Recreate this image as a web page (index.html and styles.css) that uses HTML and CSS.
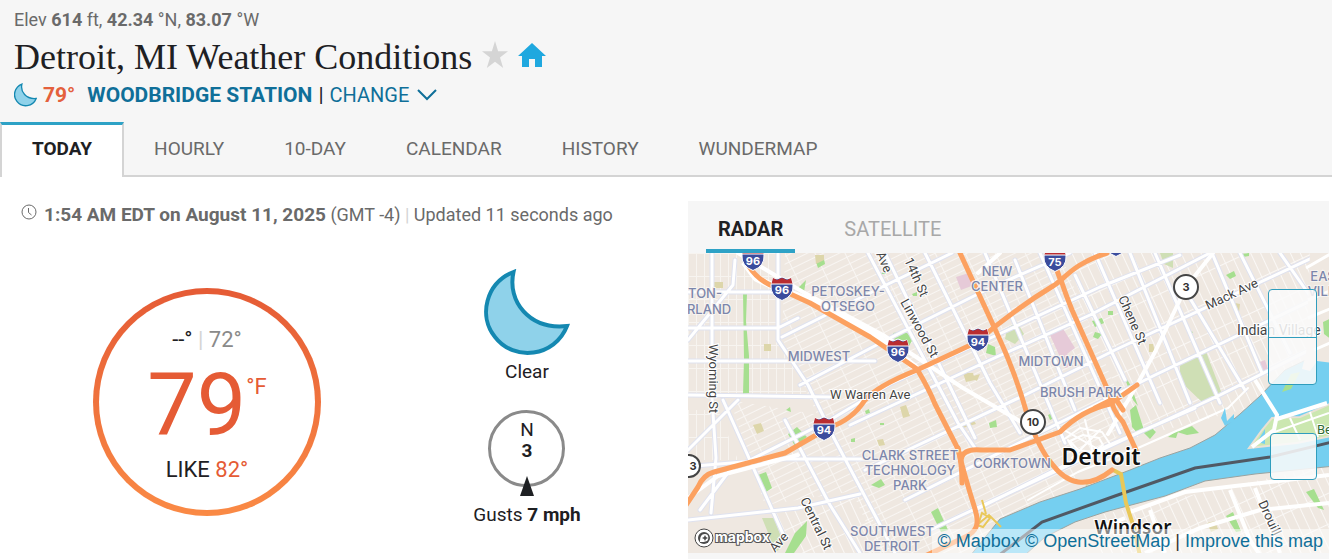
FILE: index.html
```html
<!DOCTYPE html>
<html lang="en">
<head>
<meta charset="utf-8">
<meta name="viewport" content="width=device-width, initial-scale=1">
<title>Detroit, MI Weather Conditions</title>
<link rel="stylesheet" href="styles.css">
</head>
<body>
<svg class="defs" width="0" height="0" aria-hidden="true">
  <symbol id="moon" viewBox="0 0 86 88">
    <path d="M29.500 3C2 14 -6 47 11 68C30 93 71 88 83 57C45 61 23 32 29.500 3Z"/>
  </symbol>
</svg>
<header class="city-header">
  <div class="city-info">
    <p class="coords">Elev <strong>614</strong> ft, <strong>42.34</strong> °N, <strong>83.07</strong> °W</p>
    <div class="title-row">
      <h1>Detroit, MI Weather Conditions</h1>
      <button class="icon-button" type="button" aria-label="Add to favorites">
        <svg width="26" height="28" viewBox="0 0 26 28"><path fill="#d5d5d5" d="M13 0l3.100 10.300H26l-8 6.200L21.200 27 13 20.700 4.800 27 8 16.500 0 10.300h9.900z"/></svg>
      </button>
      <button class="icon-button" type="button" aria-label="Set as home">
        <svg width="28" height="26" viewBox="0 0 28 26"><path fill="#1fa8df" d="M14 1L0 14h4v11h7v-8h6v8h7V14h4z"/></svg>
      </button>
    </div>
    <div class="station-row">
      <svg class="moon-small" width="23" height="24"><use href="#moon"/></svg>
      <strong class="station-temp">79°</strong>
      <a class="station-name" href="#station">WOODBRIDGE STATION</a>
      <span>|</span>
      <button class="change" type="button">CHANGE
        <svg width="20" height="12" viewBox="0 0 20 12"><path fill="none" stroke="#0f6f99" stroke-width="2" d="M1 1l9 9 9-9"/></svg>
      </button>
    </div>
  </div>
  <nav class="tabs">
    <a class="tab active" href="#today">TODAY</a>
    <a class="tab" href="#hourly">HOURLY</a>
    <a class="tab" href="#10-day">10-DAY</a>
    <a class="tab" href="#calendar">CALENDAR</a>
    <a class="tab" href="#history">HISTORY</a>
    <a class="tab" href="#wundermap">WUNDERMAP</a>
  </nav>
</header>
<main class="content">
  <section class="conditions">
    <p class="timestamp">
      <svg width="16" height="16" viewBox="0 0 16 16"><g fill="none" stroke="#6a6a6a"><circle cx="8" cy="8" r="7"/><path d="M7.500 4v4.500l3 2.500"/></g></svg>
      <span><strong>1:54 AM EDT on August 11, 2025</strong> (GMT -4) <span class="bar">|</span> Updated 11 seconds ago</span>
    </p>
    <div class="readings">
      <div class="dial">
        <p class="hi-lo">--° <span class="bar">|</span> <span class="low">72°</span></p>
        <p class="current"><span class="degrees">79</span><span class="unit">°F</span></p>
        <p class="feels">LIKE <span class="orange">82°</span></p>
      </div>
      <div class="sky-wind">
        <svg class="moon-large" width="86" height="88"><use href="#moon"/></svg>
        <p class="sky">Clear</p>
        <div class="compass">
          <span>N</span>
          <strong>3</strong>
          <svg class="needle" width="14" height="20" viewBox="0 0 14 20"><path fill="#1e2023" d="M7 0l7 20H0z"/></svg>
        </div>
        <p class="gusts">Gusts <strong>7 mph</strong></p>
      </div>
    </div>
  </section>
  <section class="map-panel">
    <div class="map-tabs">
      <button class="map-tab selected" type="button">RADAR</button>
      <button class="map-tab" type="button">SATELLITE</button>
    </div>
    <div class="map">
      <svg class="map-canvas" viewBox="688 253 641 300" preserveAspectRatio="xMidYMid slice" role="img" aria-label="Map of Detroit">
        <defs>
          <pattern id="grid-west" width="8" height="23" patternUnits="userSpaceOnUse"><path d="M0 0v23M0 0h8" stroke="#fff" stroke-width="2"/></pattern>
          <pattern id="grid-city" width="27" height="7" patternUnits="userSpaceOnUse" patternTransform="rotate(-26)"><path d="M0 0h27M0 0v7" stroke="#fff" stroke-width="2"/></pattern>
          <pattern id="grid-east" width="9" height="28" patternUnits="userSpaceOnUse" patternTransform="rotate(-25)"><path d="M0 0h9M0 0v28" stroke="#fff" stroke-width="2"/></pattern>
          <symbol id="shield" viewBox="0 0 24 24" overflow="visible">
            <path d="M3 1l4 1 5-2 5 2 4-1q1 4 2 7 1 11-11 15.500Q0 19 1 8q1-3 2-7z" fill="#3b4c9d" stroke="#fff"/>
            <path d="M3 1l4 2 5-2 5 2 4-2 1.500 6h-21z" fill="#b92d31"/><path d="M1.500 7h21" stroke="#fff"/>
          </symbol>
        </defs>
        <rect x="688" y="253" width="641" height="300" fill="#efe8e1"/>
        <path fill="url(#grid-west)" opacity=".5" d="M688 253h92v88l28 54H688zM688 410h30l20 50h-50z"/>
        <path fill="url(#grid-city)" opacity=".6" d="M785 253h275l70 170-75 80-75 50H880l-75-165-23-50zM730 400l90 15 40 75-95 15z"/>
        <path fill="url(#grid-east)" opacity=".7" d="M1065 253h264v110l-80 45-115 30z"/>
        <path fill="url(#grid-east)" opacity=".7" d="M1100 515l229-50v88h-229zM770 510l90-15 30 58h-90z"/>
        <g fill="#cfdfb5">
          <path d="M1180 365l25-16 17 45-19 9-23-22zM1160 253h13v15l-9-4zM1007 328l10-6 7 12-9 10-10-5zM762 518l12 0 10 27-8 7z"/>
          <path d="M1280 392l10-18 8 5-12 17zM1268 430l16-10 45-17v32l-75 11z"/>
        </g>
        <g fill="#a6df8f">
          <path d="M743 293h4l-1 28 3 35 0 37-6 1 1-35zM788 434l9-7 10 10-12 9zM758 475l8-3 6 16-9 6zM871 485l10-6 4 6-6 3zM931 512l7-4 10 22-7 2zM785 553l10-20 12-12-1 15-12 17zM816 262l8-3 1 5-7 4zM893 333l12-2 8 8-7 12-10-5zM988 344l7 3 1 9-10-3zM797 289l9-9-2 12z"/>
          <path d="M1095 332l7 2-4 5-5-2zM1092 321l10-3 2 5-9 4zM1108 311h5v4h-5zM1130 410l6-5 8 25-5 5-7-8zM1143 432l8-5 5 5-6 7zM1168 437l11-8-3 9zM1177 432l15-6 7 7-12 2zM1226 275l8-4 2 5-6 3zM1241 254l8-1v3l-6 1zM1226 516l7-4 8 19-5 1zM1306 492l8-3 10 21-6-2zM1048 415l6-3 2 5-6 3zM1187 330l6 2-3 3zM1122 371l9 15 7 20-5-6z"/>
          <path d="M786 410l4-3 1 5zM787 411l2-4zM989 423l7-3 1 7-7 1zM865 411l4-2 1 4-4 1zM851 439l4-1v4h-4zM880 423h4v2h-4zM912 294l5-2v4h-4zM880 274l6-3v3z"/>
        </g>
        <g fill="#ddd6aa">
          <path d="M712 282h11v6h-11zM764 344h7v7h-7zM753 425l8-2 3 8-7 3zM900 407l6-2 4 11-7 2zM953 427l20-8 3 5-20 6zM963 373h10l2 7-9 2zM877 440l6-1 2 6-6 1zM815 255h9v5l-8 4zM970 377l10-3-3 7zM1048 507l7 5-3 4zM1085 480l5 3-4 4zM1118 484h8l-2 5zM1207 523l8-2 3 8-7 3zM1149 344h4l2 8h-6zM1235 303l5 1-1 8-4-2z"/>
        </g>
        <path fill="#e6cad8" d="M956 277l13-4 5 12-13 5zM1050 335l12-8 13 21-8 6 6 12-8 2zM1257 363l8-3 3 9-8 3z"/>
        <g id="streets" fill="none" stroke-linejoin="round" stroke-linecap="round">
          <path stroke="#dfe2ef" stroke-width="5" d="M778 253v87l30 45 27 55 60 113M688 292h105M688 328h90l20-10M688 361h187M688 395l142 2M695 466l85-7h95M712 253v145l4 60-5 55M735 260l-2 25-45 55M723 400l60 134M688 520l110-12 62-14M785 420l45 85 30 48M868 253l90 170 17 25M885 253l90 185M925 253l65 130 30 50M985 253l80 190M1015 260l60 150M1040 253l80 180M1075 275l50 105M1095 253l65 150M1130 253l60 150M1155 253l65 150M1185 290l60 100M1212 253l50 120M1240 253l50 100M1280 253l49 70M700 510l30-40 100-50 60-36 120-55 90-42 80-32M782 337l100-50 70-34M800 385l90-47 100-50 80-35M850 425l140-65 100-45 120-62M865 470l160-75 90-45 214-100M905 500l150-75 100-50 174-83M930 530l150-70 140-65 109-55M975 510l100-50 120-52M688 450l50-50"/>
          <path stroke="#fff" stroke-width="3" d="M778 253v87l30 45 27 55 60 113M688 292h105M688 328h90l20-10M688 361h187M688 395l142 2M695 466l85-7h95M712 253v145l4 60-5 55M735 260l-2 25-45 55M723 400l60 134M688 520l110-12 62-14M785 420l45 85 30 48M868 253l90 170 17 25M885 253l90 185M925 253l65 130 30 50M985 253l80 190M1015 260l60 150M1040 253l80 180M1075 275l50 105M1095 253l65 150M1130 253l60 150M1155 253l65 150M1185 290l60 100M1212 253l50 120M1240 253l50 100M1280 253l49 70M700 510l30-40 100-50 60-36 120-55 90-42 80-32M782 337l100-50 70-34M800 385l90-47 100-50 80-35M850 425l140-65 100-45 120-62M865 470l160-75 90-45 214-100M905 500l150-75 100-50 174-83M930 530l150-70 140-65 109-55M975 510l100-50 120-52M688 450l50-50"/>
          <path stroke="#fff" stroke-width="4" d="M738 253l65 39 80 43 80 53 60 35M1213 253l-27 34-31 65-22 40-25 42M688 498l30-22 80-21M1000 253l-22 20"/>
          <path stroke="#fff" stroke-width="2" d="M1063 440l17-12 22 4 8 12-14 12-20-2-8-14M1070 441l13-6 16 3 4 7-10 7-15-2-8-9M1085 420l8 33M1064 430l41 23M1072 458l28-28M1028 500l50-28 60-24 90-40 20-20"/>
        </g>
        <path fill="#75cff0" stroke="#9aa3a0" d="M970 556l30-37 40-17 40-13 50-19 30-12 30-10 25-13 25-21 20-18 25-26 25-12 25-7v115l-30 3-50 5-50 7-40 15-60 16-30 10-30 15-20 18z"/>
        <path fill="#efe8e1" d="M1310 253h22v110l-15-2-7 10-8-2 4-15z"/>
        <path fill="none" stroke="#fff" stroke-width="3" d="M1306 268l26-15M1308 300l24-10M1308 318l24-10M1314 350l18-8"/>
        <path fill="#a6df8f" d="M1282 392l9-18 9-2-9 17zM1323 322l9-4v22l-8-6z"/>
        <path fill="#cbe7b0" stroke="#e9e1d5" stroke-width="2" d="M1249 448l13-18 10-12 28-1 32-14v33l-35 7z"/>
        <path fill="#75cff0" d="M1257 442l8-13v15zM1221 418l4-10 2 13 7-7v7l-9 5z"/>
        <g fill="none" stroke="#fff">
          <path stroke-width="4" d="M1255 380l22 35-3 15-22 17M1277 419l50-16M1130 512l55-20 50-6 94-11M1145 553l55-25 60-18 69-7M1230 490l20 50 10 15M1255 488l25 65M1150 510l15 43M1100 528l25-10"/>
          <path stroke-width="2" d="M1266 435l63-22M1290 418l10 22M1310 412l8 25"/>
        </g>
        <path fill="none" stroke="#505964" stroke-width="3" d="M998 556l44-34 73-26 80-28 75-11 62-15"/>
        <g fill="none" stroke="#e9c859" stroke-width="4"><path d="M1113 470l8 4 5 29 8 25 6 28"/><path stroke-width="2" d="M982 500l4 14M978 525l4-12 8 5-7 9-6-2 12-10 12 12"/></g>
        <g fill="none" stroke="#fff" stroke-width="7" stroke-linejoin="round"><path d="M744 262l12 16 19 9 36 14 64 34 42 34"/></g>
        <g fill="none" stroke="#fca160" stroke-width="5" stroke-linejoin="round" stroke-linecap="round">
          <path d="M748 265q10 16 27 22l35 16 60 34 25 17 22 15q12 20 18 35l23 45q6 25 17 60c5 16 1 23-10 28l-40 19"/>
          <path d="M686 505l12-18q5-12 16-15l71-19 45-26q22-7 35-27 12-14 52-30l58-27q40-34 78-57c12-7 19-22 54-33"/>
          <path d="M960 253l35 76q20 42 32 85 12 35 25 50c15 20 35 26 60 6"/>
          <path d="M1053 253q3 18 9 30 4 12 10 27l38 85q2 15 13 27l13 28"/>
          <path d="M961 462q0-14 20-12l29 0 25-9 25-9q22-22 50-28l27-19M958 448q4 15 4 35M1095 408l20-10 8 12"/>
        </g>
        <g class="shields">
          <use href="#shield" x="741" y="247" width="24" height="24"/><text x="753" y="265">96</text>
          <use href="#shield" x="770" y="277" width="24" height="24"/><text x="782" y="294">96</text>
          <use href="#shield" x="886" y="339" width="24" height="24"/><text x="898" y="356">96</text>
          <use href="#shield" x="966" y="328" width="24" height="24"/><text x="978" y="346">94</text>
          <use href="#shield" x="812" y="417" width="24" height="24"/><text x="824" y="434">94</text>
          <use href="#shield" x="1043" y="248" width="24" height="24"/><text x="1055" y="266">75</text>
          <use href="#shield" x="1104" y="233" width="24" height="24"/>
        </g>
        <g class="routes">
          <circle cx="1186" cy="287" r="12"/><text x="1186" y="291">3</text>
          <circle cx="1033" cy="422" r="12"/><text x="1033" y="426">10</text>
          <circle cx="689" cy="466" r="11"/><text x="693" y="470">3</text>
        </g>
        <g class="areas">
          <text x="705" y="298">TON-</text><text x="709" y="314">RLAND</text>
          <text x="848" y="296">PETOSKEY-</text><text x="848" y="311">OTSEGO</text>
          <text x="997" y="276">NEW</text><text x="997" y="291">CENTER</text>
          <text x="819" y="361">MIDWEST</text><text x="1051" y="366">MIDTOWN</text><text x="1081" y="397">BRUSH PARK</text>
          <text x="910" y="460">CLARK STREET</text><text x="910" y="475">TECHNOLOGY</text><text x="910" y="490">PARK</text>
          <text x="1012" y="468">CORKTOWN</text><text x="892" y="536">SOUTHWEST</text><text x="892" y="551">DETROIT</text>
          <text x="1323" y="281">EAS</text><text x="1326" y="296">VILLA</text>
        </g>
        <g class="roads">
          <text transform="translate(709 344) rotate(90)">Wyoming St</text>
          <text transform="translate(876 254) rotate(66)">Ave</text>
          <text transform="translate(904 260) rotate(66)">14th St</text>
          <text transform="translate(900 302) rotate(61)">Linwood St</text>
          <text transform="translate(1118 298) rotate(66)">Chene St</text>
          <text transform="translate(1208 310) rotate(-25)">Mack Ave</text>
          <text x="830" y="399">W Warren Ave</text>
          <text transform="translate(800 500) rotate(64)">Central St</text>
          <text transform="translate(775 553) rotate(-48)">Ave</text>
          <text transform="translate(1258 503) rotate(65)">Drouill</text>
          <text class="village" x="1237" y="335">Indian Village</text>
          <text class="park" x="1317" y="434">Be</text>
        </g>
        <g class="cities"><text x="1101" y="465" class="city-large">Detroit</text><text x="1133" y="534">Windsor</text></g>
      </svg>
      <div class="map-controls">
        <div class="zoom-group">
          <button type="button" aria-label="Zoom in"></button>
          <button type="button" aria-label="Zoom out"></button>
        </div>
        <button class="locate" type="button" aria-label="Find my location"></button>
      </div>
      <a class="map-logo" href="#mapbox" aria-label="Mapbox">
        <svg width="84" height="24" viewBox="0 0 84 24">
          <circle cx="11" cy="12" r="9" fill="#fff" stroke="#444"/><circle cx="11" cy="12" r="6" fill="#4b4b4b"/><path fill="#fff" d="M7 16c0-5 1-8 5-8 4 0 4 5 2 7-2 1-5 1-7 1z"/><path fill="#4b4b4b" d="M12 9l1 2 2 1-2 1-1 2-1-2-2-1 2-1z"/>
          <text class="logo-text" x="22" y="16">mapbox</text>
        </svg>
      </a>
      <p class="attribution"><a href="#mapbox">© Mapbox</a> <a href="#osm">© OpenStreetMap</a> | <a href="#improve">Improve this map</a></p>
    </div>
  </section>
</main>
</body>
</html>
```
FILE: styles.css
```css
* { box-sizing: border-box; }
body { margin: 0; background: #fff; color: #1e2023; font-family: Roboto, "Noto Sans", sans-serif; font-size: 18px; line-height: 24px; overflow-x: hidden; }
h1, p { margin: 0; }
a { color: inherit; text-decoration: none; }
button { margin: 0; padding: 0; border: 0; background: none; color: inherit; font: inherit; cursor: pointer; }
svg { display: block; }
.defs { position: absolute; }
strong { font-weight: 700; }

.city-header { background: #f6f6f6; }
.city-info { padding: 8px 14px 0; }
.coords { color: #6a6a6a; }
.title-row { display: flex; align-items: center; gap: 10px; height: 50px; }
.icon-button { padding-bottom: 4px; }
h1 { font: 400 36px/44px Georgia, "Liberation Serif", serif; }
.station-row { display: flex; align-items: center; gap: 6px; height: 26px; font-size: 21px; }
.moon-small { fill: #8fd2ea; stroke: #1488b1; stroke-width: 5px; }
.station-temp { color: #e4603c; margin-right: 6px; }
.station-name { color: #0f6f99; font-weight: 700; }
.change { display: flex; align-items: center; gap: 8px; color: #0f6f99; font-size: 20px; }
.tabs { display: flex; margin-top: 14px; height: 55px; box-shadow: inset 0 -2px #d4d4d4; color: #6a6a6a; font-size: 19px; }
.tab { padding: 14px 30px 0; line-height: 26px; }
.tab.active { padding-top: 11px; border: solid #d4d4d4; border-width: 3px 2px 0; border-top-color: #2ea2c6; background: #fff; color: #1e2023; font-weight: 700; }

.content { display: grid; grid-template-columns: 688fr 641fr; padding: 24px 3px 0 0; }
.timestamp { display: flex; gap: 7px; padding: 2px 0 0 21px; color: #6a6a6a; }
.timestamp svg { margin-top: 1px; }
.timestamp strong { font-size: 19px; }
.bar { color: #d4d4d4; }
.readings { display: grid; grid-template-columns: 414fr 226fr; padding: 42px 48px 0 0; justify-items: center; }
.dial { width: 228px; height: 228px; margin-top: 19px; padding-top: 32px; border: 6px solid transparent; border-radius: 50%; background: linear-gradient(#fff, #fff) padding-box, linear-gradient(#e55b35, #fa8a45) border-box; text-align: center; font-size: 22px; line-height: 28px; }
.dial .low { color: #8a8a8a; }
.current { display: flex; justify-content: center; height: 102px; color: #e55b35; }
.degrees { font-size: 88px; line-height: 102px; }
.unit { padding-top: 19px; }
.orange { color: #e55b35; }
.sky-wind { display: flex; flex-direction: column; align-items: center; font-size: 19px; }
.moon-large { fill: #8fd2ea; stroke: #1488b1; stroke-width: 4px; }
.sky { margin-top: 3px; }
.compass { position: relative; display: flex; flex-direction: column; align-items: center; width: 77px; height: 77px; margin: 26px 0 16px; padding-top: 6px; border: 3px solid #8a8a8a; border-radius: 50%; line-height: 21px; }
.needle { position: absolute; bottom: -12px; }

.map-panel { background: #f6f6f6; padding-bottom: 6px; }
.map-tabs { display: flex; gap: 37px; height: 52px; padding-left: 18px; font-size: 20px; }
.map-tab { padding: 8px 12px 0; border-bottom: 4px solid transparent; color: #a8a8a8; }
.map-tab.selected { border-color: #2ea2c6; color: #1e2023; font-weight: 700; }
.map { position: relative; overflow: hidden; }
.map-canvas { width: 100%; height: 300px; }
.shields text, .routes text { font: 700 11px Inter, sans-serif; text-anchor: middle; }
.shields text { fill: #fff; }
.routes circle { fill: #fff; stroke: #444; stroke-width: 2px; }
.routes text { fill: #333; }
.areas text { fill: #7c86ab; stroke: #f7f3ef; stroke-width: 2px; paint-order: stroke; font: 500 13px Inter, sans-serif; text-anchor: middle; }
.roads text { fill: #444; stroke: #fff; stroke-width: 2px; paint-order: stroke; font: 400 13px Roboto, sans-serif; }
.roads .village { font-size: 14px; }
.roads .park { fill: #2f6b31; }
.cities text { fill: #111; stroke: #fff; stroke-width: 2px; paint-order: stroke; font: 600 19px "Noto Sans", sans-serif; text-anchor: middle; }
.cities .city-large { font-size: 23px; }
.map-controls { position: absolute; top: 36px; right: 12px; display: flex; flex-direction: column; align-items: flex-end; gap: 48px; }
.zoom-group, .locate { border: 1px solid #2f9dbd; border-radius: 4px; background: rgba(250, 250, 250, .87); }
.zoom-group { display: flex; flex-direction: column; width: 49px; height: 96px; }
.zoom-group button { flex: 1; }
.zoom-group button + button { border-top: 1px solid #2f9dbd; }
.locate { width: 47px; height: 47px; }
.map-logo { position: absolute; left: 5px; bottom: 3px; }
.logo-text { fill: #fff; stroke: #555; stroke-width: 2px; paint-order: stroke; font: 700 14px Inter, sans-serif; }
.attribution { position: absolute; right: 0; bottom: 0; padding: 0 6px; background: rgba(255, 255, 255, .5); font-family: "Liberation Sans", sans-serif; color: #333; }
.attribution a { color: #0f6f99; }
```
